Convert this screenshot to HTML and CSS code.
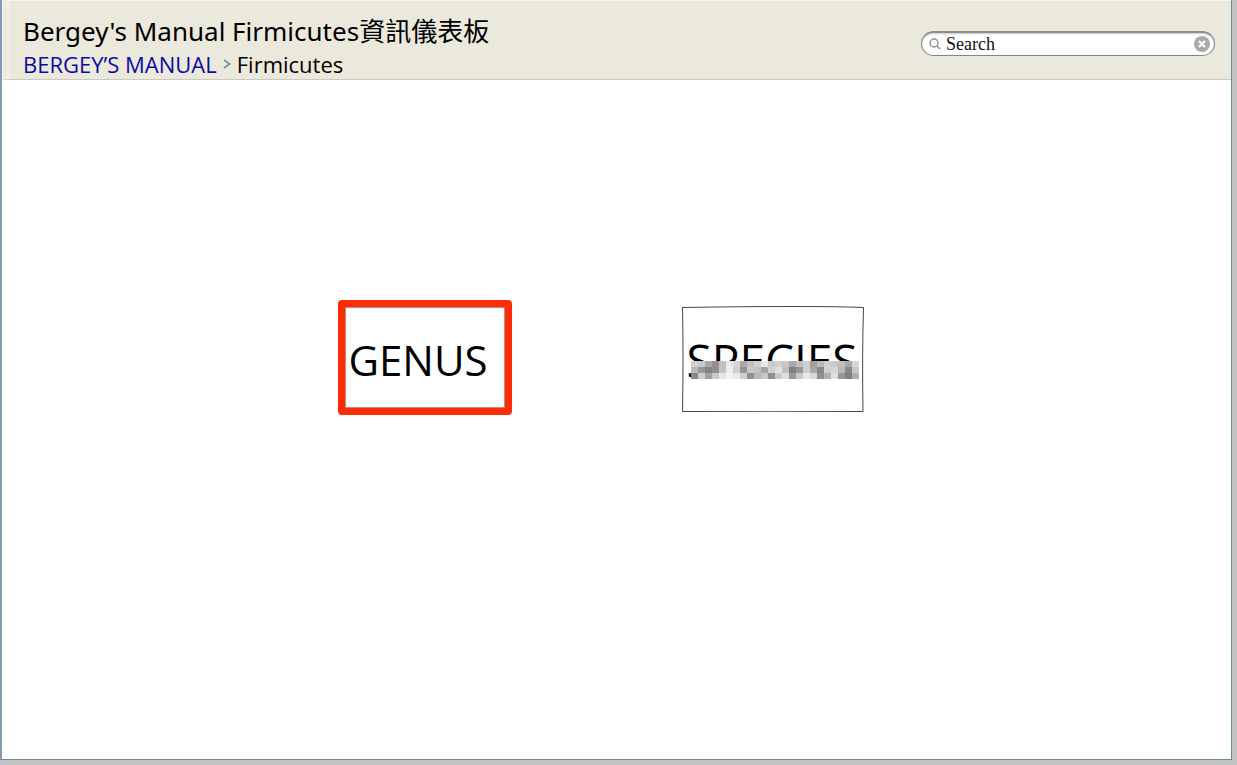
FILE: index.html
```html
<!DOCTYPE html>
<html lang="zh-Hant">
<head>
<meta charset="utf-8">
<title>Bergey's Manual Firmicutes資訊儀表板</title>
<link rel="stylesheet" href="styles.css">
</head>
<body>
<div class="window">
  <header class="header">
    <div class="heading">
      <h1 class="title">Bergey's Manual Firmicutes資訊儀表板</h1>
      <nav class="crumbs" aria-label="Breadcrumb">
        <a class="crumb-link" href="#">BERGEY’S MANUAL</a>
        <svg class="chevron" viewBox="0 0 8 10" aria-hidden="true"><path d="M1 1 6.500 5 1 9"/></svg>
        <span>Firmicutes</span>
      </nav>
    </div>
    <form class="search" role="search">
      <svg class="lens" viewBox="0 0 12 12" aria-hidden="true"><circle cx="5" cy="5" r="4"/><path d="M8 8 11 11"/></svg>
      <input class="search-input" type="text" aria-label="Search" placeholder="Search">
      <button class="clear" type="reset" aria-label="Clear search">
        <svg viewBox="0 0 16 16" aria-hidden="true"><circle cx="8" cy="8" r="8"/><path d="M5 5 11 11M11 5 5 11"/></svg>
      </button>
    </form>
  </header>
  <main class="board">
    <a class="card card-genus" href="#">GENUS</a>
    <a class="card card-species" href="#">
      <svg class="sketch" viewBox="0 0 182 106" preserveAspectRatio="none" aria-hidden="true"><path d="M0.500 1.500Q60 .5 110 .5T181.500 1.500Q180 50 181 105.500Q90 106 .5 105.500Q1.500 50 .5 1.500Z"/></svg>
      <span class="label">SPECIES<svg class="mosaic" viewBox="0 0 24 3" preserveAspectRatio="none" shape-rendering="crispEdges" aria-hidden="true"></svg></span>
    </a>
  </main>
</div>
<script src="mosaic.js"></script>
</body>
</html>
```
FILE: styles.css
```css
* { box-sizing: border-box; }
body {
  margin: 0;
  min-height: 100vh;
  display: flex;
  padding: 0 5px 5px 0;
  background: #c3c2c3;
  font-family: "Comic Sans MS", "Open Sans", "Noto Sans CJK TC", sans-serif;
  color: #000;
}
.window {
  flex: 1;
  display: flex;
  flex-direction: column;
  background: #fff;
  border: 1px solid #6b8b98;
  border-top: 0;
  border-left: 2px solid #8299b8;
}
.header {
  display: flex;
  justify-content: space-between;
  align-items: flex-start;
  height: 80px;
  padding: 14px 16px 0 14px;
  background: #ebe9dc;
  border-top: 1px solid #f8f5ea;
  border-bottom: 1px solid #cdc9bd;
  border-left: 7px double #f4eee8;
}
.title {
  margin: 0;
  font: 400 26px/32px "Segoe UI", "Noto Sans", "Noto Sans CJK TC", sans-serif;
}
.crumbs {
  display: flex;
  align-items: center;
  gap: 6px;
  font-size: 22px;
  line-height: 34px;
}
.crumb-link { color: #0b0ba8; text-decoration: none; }
.chevron { width: 8px; height: 10px; fill: none; stroke: #77756f; stroke-width: 1.5; }
.search {
  display: flex;
  align-items: center;
  gap: 5px;
  width: 294px;
  height: 25px;
  margin-top: 16px;
  padding: 0 4px 0 7px;
  border: 1px solid #7b8797;
  border-top: 2px solid #8a8d96;
  border-radius: 13px;
  background: #fff;
  box-shadow: inset 0 1px 2px #c9c9ce;
}
.lens { flex: none; width: 12px; height: 12px; fill: none; stroke: #8f9093; stroke-width: 1.5; }
.search-input {
  flex: 1;
  min-width: 0;
  padding: 0;
  border: 0;
  outline: 0;
  background: transparent;
  font: 18px/20px "Liberation Serif", serif;
  color: #111;
}
.search-input::placeholder { color: #111; opacity: 1; }
.clear { width: 16px; height: 16px; padding: 0; border: 0; background: none; }
.clear svg { display: block; width: 16px; height: 16px; fill: #aaa; stroke: none; }
.clear path { stroke: #fff; stroke-width: 2; }
.board {
  flex: 1;
  display: flex;
  justify-content: center;
  align-items: flex-start;
  gap: 170px;
  padding: 220px 32px 0 0;
}
.card {
  display: flex;
  align-items: center;
  color: #000;
  font-size: 42px;
  line-height: 48px;
  text-decoration: none;
}
.card-genus {
  width: 174px;
  height: 115px;
  padding: 4px 0 0 4px;
  border: 7px solid #ff2c06;
  border-radius: 4px;
  box-shadow: inset 0 0 1px 1px #9b8c89;
}
.card-species {
  position: relative;
  width: 182px;
  height: 106px;
  margin-top: 6px;
  padding: 2px 5px 0;
}
.sketch { position: absolute; inset: 0; width: 100%; height: 100%; fill: none; stroke: #444; }
.label { position: relative; font-size: 46px; }
.mosaic { position: absolute; left: 4px; top: 25px; width: 168px; height: 18px; }
```
FILE: mosaic.js
```javascript
const shades = [
  "d0 c8 a8 90 c0 e8 d8 a8 c0 d0 e8 c8 d0 c8 a8 c0 d0 a0 b8 d0 c8 c0 a8 d8",
  "b8 98 84 90 c4 ec d0 94 c8 c0 a4 d0 e0 c0 80 98 d0 a8 88 d0 d8 b8 88 c8",
  "88 d0 a0 c8 e8 f4 e8 d0 90 b8 c8 90 c8 e0 98 c8 e8 d8 90 b0 e0 98 80 b0"
];
const mosaic = document.querySelector(".mosaic");
shades.forEach((row, y) => row.split(" ").forEach((shade, x) => {
  const cell = document.createElementNS("http://www.w3.org/2000/svg", "rect");
  cell.setAttribute("x", x);
  cell.setAttribute("y", y);
  cell.setAttribute("width", 1);
  cell.setAttribute("height", 1);
  cell.setAttribute("fill", "#" + shade.repeat(3));
  mosaic.append(cell);
}));
```
